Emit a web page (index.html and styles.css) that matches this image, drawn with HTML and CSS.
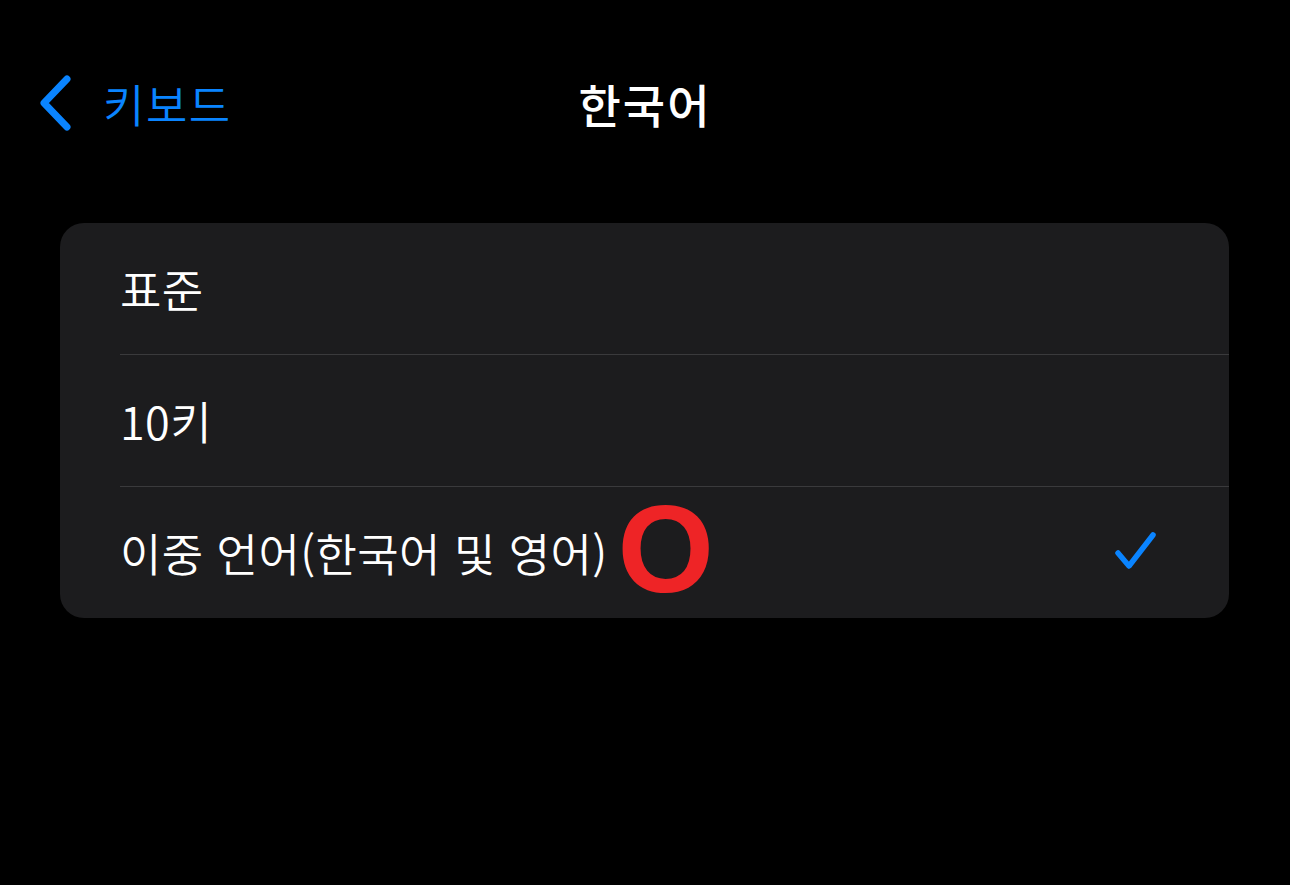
FILE: index.html
```html
<!DOCTYPE html>
<html lang="ko">
<head>
<meta charset="utf-8">
<link rel="stylesheet" href="styles.css">
</head>
<body>
<header class="nav">
  <div class="back">
    <svg class="chev" width="34" height="56" viewBox="0 0 34 56"><path d="M29 4 L6 28 L29 52" fill="none" stroke="#0a84ff" stroke-width="7" stroke-linecap="round" stroke-linejoin="round"/></svg>
    <span class="back-label">키보드</span>
  </div>
  <h1 class="title">한국어</h1>
  <div class="spacer"></div>
</header>
<main class="content">
  <section class="card">
    <div class="row"><span class="label">표준</span></div>
    <div class="row"><span class="label">10키</span></div>
    <div class="row">
      <span class="label">이중 언어(한국어 및 영어)</span>
      <span class="mark">O</span>
      <svg class="check" width="46" height="44" viewBox="0 0 46 44"><path d="M5 22 L16 35 L40 4" fill="none" stroke="#0a84ff" stroke-width="5.5" stroke-linecap="round" stroke-linejoin="round"/></svg>
    </div>
  </section>
</main>
</body>
</html>
```

FILE: styles.css
```css
html, body {
  margin: 0;
  padding: 0;
  background: #000;
  font-family: "Noto Sans CJK KR", "Noto Sans", sans-serif;
  color: #fff;
}
.nav {
  height: 206px;
  display: grid;
  grid-template-columns: 1fr auto 1fr;
  align-items: center;
}
.back {
  display: flex;
  align-items: center;
  padding-left: 38px;
  gap: 31px;
  color: #0a84ff;
}
.back-label {
  font-size: 45px;
  font-weight: 350;
  letter-spacing: 1.5px;
  line-height: 1;
}
.title {
  margin: 0;
  font-size: 46px;
  font-weight: 500;
  letter-spacing: 2px;
  line-height: 1;
}
.content {
  padding: 17px 61px 0 60px;
}
.card {
  background: #1c1c1e;
  border-radius: 24px;
  overflow: hidden;
}
.row {
  height: 131px;
  margin-left: 60px;
  padding-right: 70px;
  display: flex;
  align-items: center;
  border-top: 1px solid #3a3a3c;
}
.row:first-child {
  border-top: none;
}
.label {
  font-size: 45px;
  font-weight: 350;
  letter-spacing: 0.4px;
  line-height: 1.2;
}
.mark {
  margin-left: 10px;
  margin-top: -6px;
  color: #ee2426;
  font-family: "Liberation Sans", "Noto Sans", sans-serif;
  font-weight: 700;
  font-size: 124px;
  line-height: 1.05;
}
.check {
  margin-left: auto;
}
```
